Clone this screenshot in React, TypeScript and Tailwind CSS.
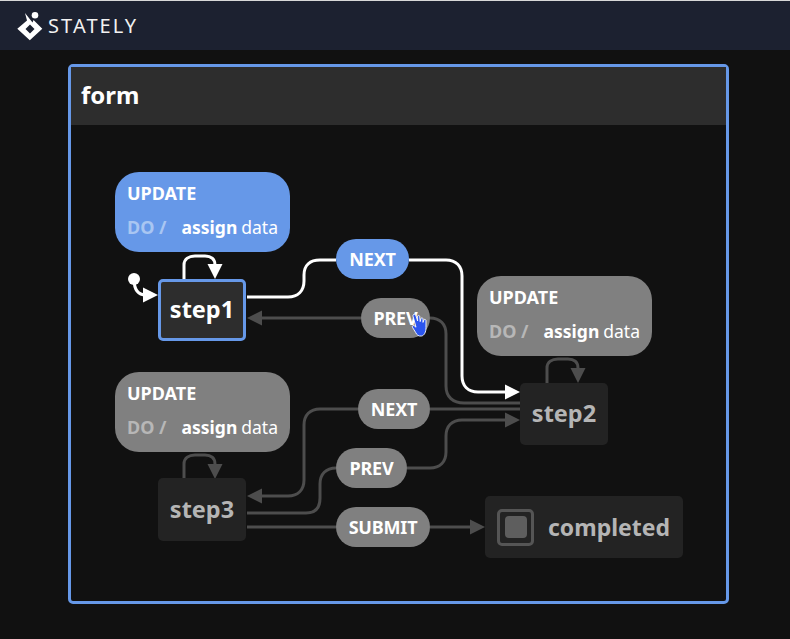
const font = { fontFamily: '"Noto Sans", "Open Sans", sans-serif' };

function Pill({ label, className }: { label: string; className: string }) {
  return (
    <div className={`absolute flex h-[40px] items-center justify-center rounded-[20px] text-[18px] font-bold tracking-[-0.2px] text-white ${className}`}>
      {label}
    </div>
  );
}

function Action({ className, active }: { className: string; active?: boolean }) {
  return (
    <div className={`absolute flex h-[80px] w-[175px] flex-col rounded-[24px] px-[12px] pt-[10px] text-white ${active ? 'bg-[#6698e8]' : 'bg-[#808080]'} ${className}`}>
      <div className="text-[18px] font-bold leading-[22px]">UPDATE</div>
      <div className="mt-[12px] flex text-[17.5px] leading-[22px]">
        <span className={`w-[55px] text-[18px] font-bold ${active ? 'text-[#a9c6f2]' : 'text-[#b7b7b7]'}`}>DO /</span>
        <span className="font-bold">assign</span>
        <span className="ml-[4px]">data</span>
      </div>
    </div>
  );
}

function Edges() {
  const gray = '#4d4d4d';
  return (
    <svg className="absolute inset-0" width="655" height="476" viewBox="71 125 655 476" fill="none">
      <g stroke={gray} strokeWidth="3">
        <path d="M361 318H258" />
        <path d="M430 318C440 318 446 324 446 334V386C446 397 453 403 464 403H520" />
        <path d="M358 409H320C310 409 304 415 304 425V480C304 490 298 496 288 496H258" />
        <path d="M430 409H520" />
        <path d="M247 513H306C315 513 320 508 320 498V484C320 474 326 468 336 468" />
        <path d="M407 468H430C440 468 446 462 446 452V436C446 426 452 420 462 420H508" />
        <path d="M247 527H336" />
        <path d="M430 527H474" />
        <path d="M547 383V368C547 362 552 359 558 359H568C574 359 578 362 578 368" />
        <path d="M184 478V464C184 458 189 455 195 455H205C211 455 215 458 215 464" />
      </g>
      <g fill={gray}>
        <path d="M247 318L262 310.5V325.5Z" />
        <path d="M247 496L262 488.5V503.5Z" />
        <path d="M520 420L505 412.5V427.5Z" />
        <path d="M485 527L470 519.5V534.5Z" />
        <path d="M578 383L570.5 368H585.5Z" />
        <path d="M215 479L207.5 464H222.5Z" />
      </g>
      <g stroke="#ffffff" strokeWidth="3">
        <path d="M184 279V265C184 259 189 256 195 256H205C211 256 215 259 215 265" />
        <path d="M134 279C134 289 138 295 146 295" />
        <path d="M247 297H288C298 297 304 291 304 281V275C304 265 310 260 320 260H336" />
        <path d="M409 260H446C456 260 462 266 462 276V376C462 386 468 392 478 392H508" />
      </g>
      <g fill="#ffffff">
        <path d="M215 279L207.5 264H222.5Z" />
        <circle cx="134" cy="279" r="6" />
        <path d="M158 295L143 287.5V302.5Z" />
        <path d="M520 392L505 384.5V399.5Z" />
      </g>
    </svg>
  );
}

function Cursor() {
  return (
    <svg className="absolute left-[340px] top-[188px]" width="20" height="25" viewBox="0 0 20 25">
      <path
        d="M2.5 1.5C3.6 1 4.6 1.6 5 2.8L6.6 8V2.9C7.4 2.2 8.3 2.4 8.7 3.2L9.2 8.6L10 5.2C10.8 4.6 11.7 4.9 12 5.7L12 9.4L13 6.6C13.8 6.1 14.7 6.5 15 7.4V14.5C15 19 13.4 22.5 10.5 23C7.5 23.5 5.8 22 4.6 19.4L1.5 14.4C0.9 13.3 1.7 12.3 2.9 12.4L5 14.2L2 3.2C1.9 2.5 2 1.8 2.5 1.5Z"
        fill="#2b55ee"
        stroke="#ffffff"
        strokeWidth="0.9"
      />
    </svg>
  );
}

export default function App() {
  return (
    <div className="flex h-[639px] w-[790px] flex-col overflow-hidden bg-[#111111]" style={font}>
      <div className="h-px bg-[#d8d8d8]" />
      <header className="flex h-[49px] items-center bg-[#1c2130] pl-[17px]">
        <svg className="mt-px" width="26" height="30" viewBox="17 11 26 30">
          <circle cx="35" cy="15.3" r="3.3" fill="#ffffff" />
          <path
            fillRule="evenodd"
            d="M25 13L32.5 22.5L33.5 20L42.3 28.7L29.8 40.2L17.3 28.7L27 20.5ZM30 24.5L25.5 29L30 33.5L34.5 29Z"
            fill="#ffffff"
          />
        </svg>
        <span className="ml-[5px] text-[20px] font-normal leading-none tracking-[2.1px] text-[#f2f2f2]">STATELY</span>
      </header>
      <main className="ml-[68px] mt-[14px] flex h-[540px] w-[661px] flex-col rounded-[5px] border-[3px] border-[#6698e8]">
        <div className="flex h-[58px] shrink-0 items-center bg-[#2d2d2d] pb-[2px] pl-[10px] text-[24px] font-bold text-white">form</div>
        <div className="relative flex-1">
          <Edges />
          <Action className="left-[44px] top-[47px]" active />
          <div className="absolute left-[87px] top-[154px] flex h-[62px] w-[88px] items-center justify-center rounded-[5px] border-[3px] border-[#6698e8] bg-[#2d2d2d] text-[23.5px] font-bold text-white">step1</div>
          <Pill label="NEXT" className="left-[265px] top-[114px] w-[73px] bg-[#6698e8]" />
          <Pill label="PREV" className="left-[290px] top-[173px] w-[69px] bg-[#808080]" />
          <Action className="left-[406px] top-[151px]" />
          <div className="absolute left-[449px] top-[258px] flex h-[62px] w-[88px] items-center justify-center rounded-[5px] bg-[#232323] text-[23.5px] font-bold text-[#b5b5b5]">step2</div>
          <Pill label="NEXT" className="left-[287px] top-[264px] w-[72px] bg-[#808080]" />
          <Action className="left-[44px] top-[247px]" />
          <Pill label="PREV" className="left-[265px] top-[323px] w-[71px] bg-[#808080]" />
          <Pill label="SUBMIT" className="left-[265px] top-[382px] w-[94px] bg-[#808080]" />
          <div className="absolute left-[87px] top-[353px] flex h-[63px] w-[88px] items-center justify-center rounded-[5px] bg-[#232323] text-[23.5px] font-bold text-[#b5b5b5]">step3</div>
          <div className="absolute left-[414px] top-[371px] flex h-[62px] w-[198px] items-center rounded-[5px] bg-[#232323] pl-[12px] text-[23px] font-bold text-[#b5b5b5]">
            <div className="flex h-[37px] w-[37px] items-center justify-center rounded-[5px] border-[3px] border-[#555555]">
              <div className="h-[22px] w-[22px] rounded-[4px] bg-[#5e5e5e]" />
            </div>
            <span className="ml-[14px]">completed</span>
          </div>
          <Cursor />
        </div>
      </main>
    </div>
  );
}
